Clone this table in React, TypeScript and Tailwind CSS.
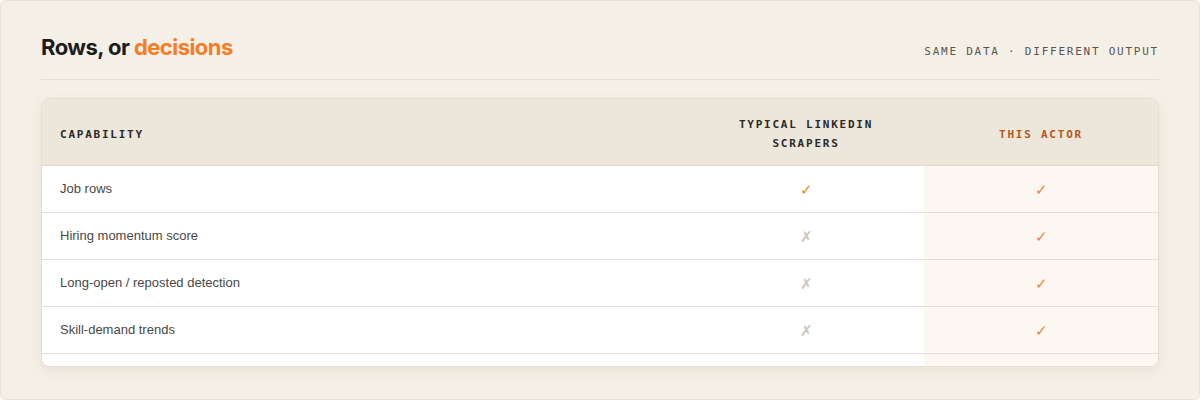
import React from "react";

const rows = [
  { label: "Job rows", typical: true },
  { label: "Hiring momentum score", typical: false },
  { label: "Long-open / reposted detection", typical: false },
  { label: "Skill-demand trends", typical: false },
];

const mono = { fontFamily: '"DejaVu Sans Mono", "Liberation Mono", monospace' };

function Check() {
  return <span className="text-[#ee8430] text-[15px] leading-none">✓</span>;
}
function Cross() {
  return <span className="text-[#cbc6b7] text-[15px] leading-none">✗</span>;
}

export default function App() {
  return (
    <div className="w-[1200px] h-[400px] bg-[#f5f0e7] border border-[#e6e0d5] rounded-[6px] px-10 pt-[32px]" style={{ fontFamily: '"Liberation Sans", Arial, sans-serif' }}>
      <div className="flex justify-between items-end pb-[18px] border-b border-[#e3ddd2]">
        <h2 className="text-[22px] leading-[28px] font-bold tracking-[-0.025em] text-[#1c1c1c]" style={{ fontFamily: 'Inter, "Liberation Sans", sans-serif' }}>
          Rows, or <span className="text-[#f47d25]">decisions</span>
        </h2>
        <div className="text-[11px] leading-[16px] tracking-[0.16em] text-[#555] mb-[1px]" style={mono}>
          SAME DATA · DIFFERENT OUTPUT
        </div>
      </div>
      <div className="mt-[18px] rounded-[8px] border border-[#e4ded3] bg-white overflow-hidden shadow-[0_4px_12px_rgba(120,100,70,0.10)]">
        <div className="flex bg-[#ede6da] border-b border-[#e0d9cd]">
          <div className="flex-1 flex items-center px-[18px] pt-[16px] pb-[12px] text-[11px] leading-[19px] font-bold tracking-[0.16em] text-[#2a2a2a]" style={mono}>
            CAPABILITY
          </div>
          <div className="w-[236px] flex items-center justify-center text-center pt-[16px] pb-[12px] text-[11px] leading-[19px] font-bold tracking-[0.16em] text-[#2a2a2a]" style={mono}>
            TYPICAL LINKEDIN<br />SCRAPERS
          </div>
          <div className="w-[234px] flex items-center justify-center pt-[16px] pb-[12px] text-[11px] leading-[19px] font-bold tracking-[0.16em] text-[#b5561c]" style={mono}>
            THIS ACTOR
          </div>
        </div>
        <div className="flex flex-col">
          {rows.map((r) => (
            <div key={r.label} className="flex border-b border-[#e3ded6]">
              <div className="flex-1 h-[46px] flex items-center px-[18px] text-[13px] text-[#484848]">{r.label}</div>
              <div className="w-[236px] h-[46px] flex items-center justify-center">
                {r.typical ? <Check /> : <Cross />}
              </div>
              <div className="w-[234px] h-[46px] flex items-center justify-center bg-[#fcf7f0]">
                <Check />
              </div>
            </div>
          ))}
          <div className="flex h-[12px]">
            <div className="flex-1" />
            <div className="w-[236px]" />
            <div className="w-[234px] bg-[#fcf7f0]" />
          </div>
        </div>
      </div>
    </div>
  );
}
